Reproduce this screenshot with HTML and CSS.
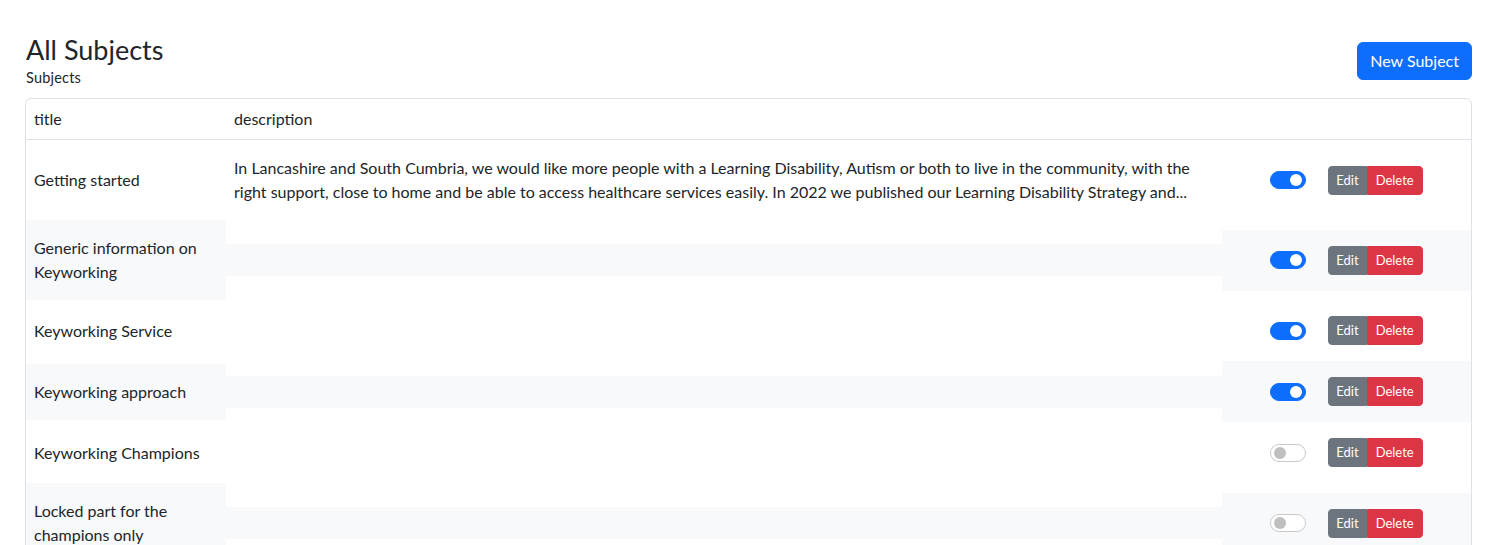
FILE: index.html
```html
<!DOCTYPE html>
<html lang="en">
<head>
<meta charset="utf-8">
<title>All Subjects</title>
<link rel="stylesheet" href="styles.css">
</head>
<body>
<div class="page">
  <header class="page-head">
    <div class="head-text">
      <h3 class="page-title">All Subjects</h3>
      <div class="page-sub">Subjects</div>
    </div>
    <button class="btn btn-primary">New Subject</button>
  </header>

  <div class="card">
    <div class="row head-row">
      <div class="cell c-title">title</div>
      <div class="cell c-desc">description</div>
      <div class="cell c-act"></div>
    </div>

    <div class="row">
      <div class="cell c-title">Getting started</div>
      <div class="cell c-desc"><div class="clamp">In Lancashire and South Cumbria, we would like more people with a Learning Disability, Autism or both to live in the community, with the right support, close to home and be able to access healthcare services easily. In 2022 we published our Learning Disability Strategy and...</div></div>
      <div class="cell c-act"><span class="switch on"></span><span class="btn-group"><button class="btn btn-sm btn-edit">Edit</button><button class="btn btn-sm btn-del">Delete</button></span></div>
    </div>

    <div class="row striped">
      <div class="cell c-title">Generic information on Keyworking</div>
      <div class="cell c-desc"></div>
      <div class="cell c-act"><span class="switch on"></span><span class="btn-group"><button class="btn btn-sm btn-edit">Edit</button><button class="btn btn-sm btn-del">Delete</button></span></div>
    </div>

    <div class="row">
      <div class="cell c-title">Keyworking Service</div>
      <div class="cell c-desc"></div>
      <div class="cell c-act"><span class="switch on"></span><span class="btn-group"><button class="btn btn-sm btn-edit">Edit</button><button class="btn btn-sm btn-del">Delete</button></span></div>
    </div>

    <div class="row striped">
      <div class="cell c-title">Keyworking approach</div>
      <div class="cell c-desc"></div>
      <div class="cell c-act"><span class="switch on"></span><span class="btn-group"><button class="btn btn-sm btn-edit">Edit</button><button class="btn btn-sm btn-del">Delete</button></span></div>
    </div>

    <div class="row">
      <div class="cell c-title">Keyworking Champions</div>
      <div class="cell c-desc"></div>
      <div class="cell c-act"><span class="switch"></span><span class="btn-group"><button class="btn btn-sm btn-edit">Edit</button><button class="btn btn-sm btn-del">Delete</button></span></div>
    </div>

    <div class="row striped">
      <div class="cell c-title">Locked part for the champions only</div>
      <div class="cell c-desc"></div>
      <div class="cell c-act"><span class="switch"></span><span class="btn-group"><button class="btn btn-sm btn-edit">Edit</button><button class="btn btn-sm btn-del">Delete</button></span></div>
    </div>
  </div>
</div>
</body>
</html>
```

FILE: styles.css
```css
* { box-sizing: border-box; }
html, body { margin: 0; padding: 0; background: #fff; }
body {
  font-family: "Lato", "Liberation Sans", sans-serif;
  font-size: 16px;
  line-height: 24px;
  color: #212529;
}
.page {
  padding: 33px 29px 0 25px;
}
.page-head {
  display: flex;
  align-items: center;
  justify-content: space-between;
  margin-bottom: 10px;
}
.page-title {
  margin: 0 0 0 1px;
  font-size: 27px;
  font-weight: 400;
  line-height: 34px;
}
.page-sub {
  font-size: 14.5px;
  line-height: 21px;
  margin-left: 1px;
  letter-spacing: 0.2px;
}
.btn {
  font-family: inherit;
  border: 1px solid transparent;
  cursor: pointer;
  color: #fff;
}
.btn-primary {
  background: #0d6efd;
  border-color: #0d6efd;
  font-size: 16px;
  line-height: 24px;
  padding: 6px 12px;
  border-radius: 6px;
  height: 38px;
  margin-top: 1px;
}
.card {
  border: 1px solid #dee2e6;
  border-radius: 6px;
  overflow: hidden;
}
.row {
  display: flex;
  align-items: center;
}
.head-row {
  border-bottom: 1px solid #dee2e6;
}
.head-row .cell {
  padding: 8px;
  min-height: 40px;
  align-self: stretch;
}
.cell {
  padding: 16px 8px;
}
.c-title { width: 200px; flex: none; }
.c-desc { width: 996px; flex: none; min-height: 32px; }
.c-act {
  flex: 1;
  display: flex;
  align-items: center;
  justify-content: center;
  gap: 22px;
}
.head-row .c-act { display: block; }
.striped .cell { background: #f8f9fa; }
.clamp {
  display: -webkit-box;
  -webkit-line-clamp: 2;
  -webkit-box-orient: vertical;
  overflow: hidden;
}
.switch {
  position: relative;
  display: inline-block;
  width: 36px;
  height: 18px;
  border-radius: 9px;
  border: 1px solid #c8c9ca;
  background: #fff;
  flex: none;
}
.switch::after {
  content: "";
  position: absolute;
  top: 2px;
  left: 3px;
  width: 12px;
  height: 12px;
  border-radius: 50%;
  background: #bfbfbf;
}
.switch.on {
  background: #0d6efd;
  border-color: #0d6efd;
}
.switch.on::after {
  left: auto;
  right: 3px;
  background: #fff;
}
.btn-group { display: inline-flex; }
.btn-sm {
  font-size: 13px;
  line-height: 19px;
  padding: 4px 7px;
  height: 29px;
}
.btn-del { padding: 4px 8px; }
.btn-edit {
  background: #6c757d;
  border-color: #6c757d;
  border-radius: 4px 0 0 4px;
}
.btn-del {
  background: #dc3545;
  border-color: #dc3545;
  border-radius: 0 4px 4px 0;
}
```
